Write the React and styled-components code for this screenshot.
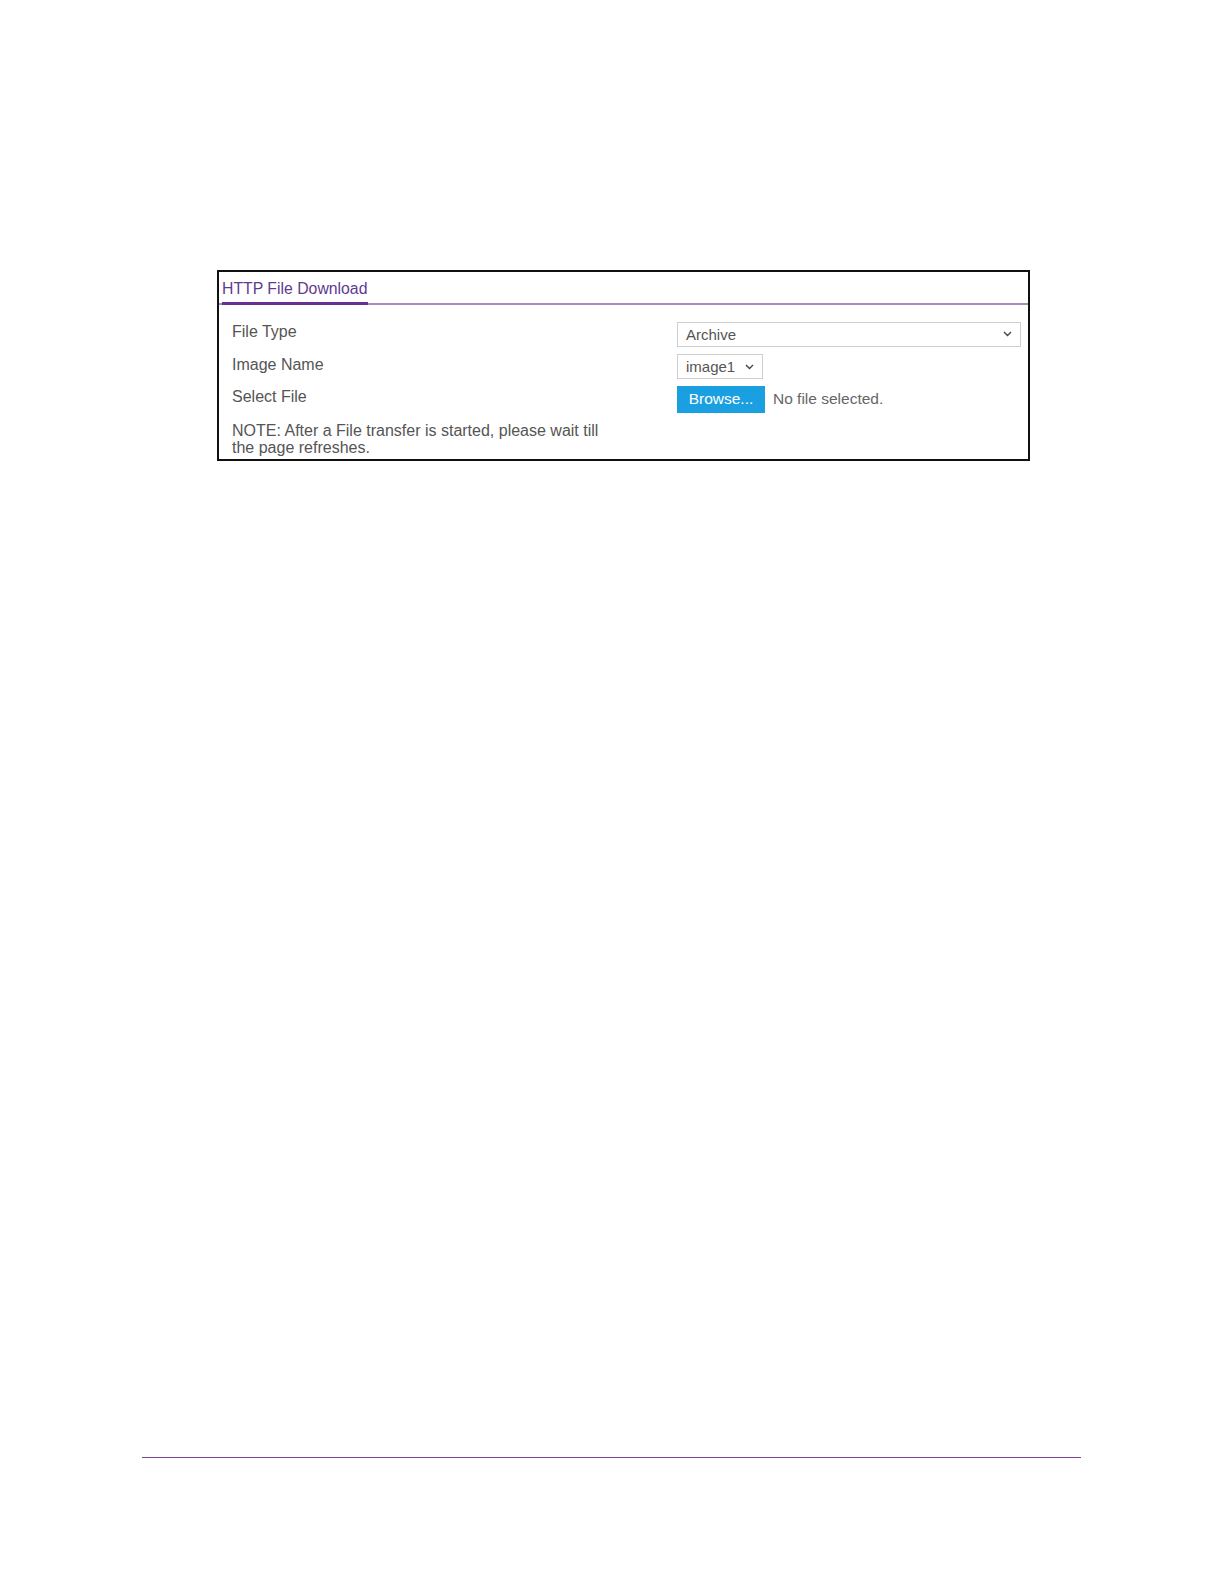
import React from 'react'
import styled, { createGlobalStyle } from 'styled-components'

const GlobalStyle = createGlobalStyle`
  html, body {
    margin: 0;
    padding: 0;
    background: #fff;
    overflow: hidden;
  }
  body {
    font-family: "Liberation Sans", Arial, sans-serif;
  }
`

const Page = styled.div`
  width: 100%;
  height: 1584px;
  overflow: hidden;
  display: flex;
  flex-direction: column;
`

const Panel = styled.section`
  margin: 270px 0 0 217px;
  width: 813px;
  height: 191px;
  box-sizing: border-box;
  border: 2px solid #111;
  display: flex;
  flex-direction: column;
`

const Header = styled.div`
  display: flex;
  padding: 7px 0 0 3px;
  border-bottom: 2px solid #a68bbd;
`

const Tab = styled.h2`
  margin: 0 0 -2px 0;
  font-size: 15.8px;
  font-weight: normal;
  color: #5f3a8f;
  line-height: 19px;
  padding: 0 1px 4px 0;
  border-bottom: 3px solid #6a2e93;
`

const Body = styled.div`
  display: grid;
  grid-template-columns: 445px 1fr;
  grid-auto-rows: 26px;
  row-gap: 6.5px;
  padding: 16px 8px 0 13px;
`

const Label = styled.div`
  font-size: 16px;
  color: #555;
  display: flex;
  align-items: center;
  height: 22px;
`

const Note = styled.div`
  grid-column: 1 / span 2;
  font-size: 16px;
  line-height: 17px;
  color: #555;
  width: 390px;
  margin-top: 3px;
`

const Control = styled.div`
  display: flex;
  align-items: center;
  gap: 8px;
`

const SelectBox = styled.div`
  box-sizing: border-box;
  width: ${p => p.$width}px;
  height: 25px;
  border: 1px solid #cfcfcf;
  background: #fff;
  display: flex;
  align-items: center;
  justify-content: space-between;
  padding: 0 8px 0 8px;
  font-size: 15px;
  color: #555;
`

const BrowseButton = styled.div`
  box-sizing: border-box;
  width: 88px;
  height: 27px;
  background: #1a9fe0;
  color: #fff;
  font-size: 15.5px;
  display: flex;
  align-items: center;
  justify-content: center;
`

const FileText = styled.span`
  font-size: 15.5px;
  color: #666;
`

const Rule = styled.div`
  margin: 996px 0 0 142px;
  width: 939px;
  height: 1px;
  background: #7a4590;
`

const Chevron = () => (
  <svg width="9" height="6" viewBox="0 0 9 6">
    <path d="M1 1 L4.5 4.5 L8 1" fill="none" stroke="#444" strokeWidth="1.4" />
  </svg>
)

export default function App() {
  return (
    <Page>
      <GlobalStyle />
      <Panel>
        <Header>
          <Tab>HTTP File Download</Tab>
        </Header>
        <Body>
          <Label>File Type</Label>
          <Control>
            <SelectBox $width={344}>
              <span>Archive</span>
              <Chevron />
            </SelectBox>
          </Control>
          <Label>Image Name</Label>
          <Control>
            <SelectBox $width={86}>
              <span>image1</span>
              <Chevron />
            </SelectBox>
          </Control>
          <Label>Select File</Label>
          <Control>
            <BrowseButton>Browse...</BrowseButton>
            <FileText>No file selected.</FileText>
          </Control>
          <Note>NOTE: After a File transfer is started, please wait till the page refreshes.</Note>
        </Body>
      </Panel>
      <Rule />
    </Page>
  )
}
